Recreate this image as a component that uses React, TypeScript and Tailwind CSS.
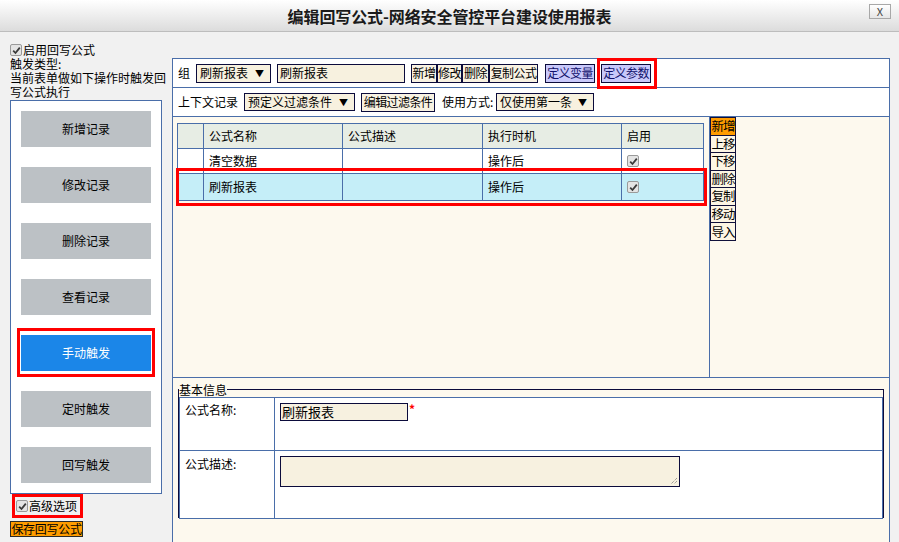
import React from "react";

const BLUE = "border-[#4a6ea9]";

function Check() {
  return (
    <span className="inline-flex items-center justify-center w-[12px] h-[12px] border border-[#9a9a9a] bg-[#e4e4e4] rounded-[2px] shrink-0">
      <svg width="9" height="9" viewBox="0 0 9 9">
        <path d="M1.2 4.6 L3.5 7 L7.8 1.6" stroke="#3a3a3a" strokeWidth="1.8" fill="none" />
      </svg>
    </span>
  );
}

function Sel({ w, h, text }: { w: string; h: string; text: string }) {
  return (
    <div className={`${w} ${h} border border-[#0b0b3b] bg-[#f7f1df] flex items-center pl-[3px] pr-[6px] justify-between shrink-0 whitespace-nowrap`}>
      <span>{text}</span>
      <span className="text-[9px] leading-none">▼</span>
    </div>
  );
}

function Btn({ children, cls = "" }: { children: React.ReactNode; cls?: string }) {
  return (
    <div className={`h-[19px] border border-[#0b0b3b] flex items-center justify-center leading-none shrink-0 whitespace-nowrap overflow-hidden tracking-[-0.6px] ${cls}`}>
      {children}
    </div>
  );
}

export default function App() {
  const nav = ["新增记录", "修改记录", "删除记录", "查看记录", "手动触发", "定时触发", "回写触发"];
  const side = ["新增", "上移", "下移", "删除", "复制", "移动", "导入"];
  return (
    <div className="w-[899px] h-[542px] overflow-hidden bg-[#f1f1f1] flex flex-col text-[12px] text-black font-['Noto_Sans_CJK_SC','Noto_Sans',sans-serif]">
      {/* title bar */}
      <div className="h-[32px] shrink-0 relative flex items-center justify-center border-b border-[#bdbdbd] bg-gradient-to-b from-white to-[#dcdcdc]">
        <span className="text-[16px] font-bold text-[#1a1a1a] tracking-[-0.1px]">编辑回写公式-网络安全管控平台建设使用报表</span>
        <div className="absolute right-[8px] top-[4px] w-[22px] h-[15px] border border-[#a8a8a8] bg-gradient-to-b from-white to-[#e6e6e6] flex items-center justify-center text-[11px] leading-none text-[#444]">
          X
        </div>
      </div>

      <div className="flex flex-1 min-h-0">
        {/* left column */}
        <div className="w-[172px] shrink-0 pl-[10px] pt-[11px] flex flex-col">
          <div className="flex items-center h-[14px] leading-[14px] gap-[1px]">
            <Check />
            <span>启用回写公式</span>
          </div>
          <div className="leading-[14px] h-[14px]">触发类型:</div>
          <div className="leading-[14px] w-[160px] h-[28px]">当前表单做如下操作时触发回写公式执行</div>
          <div className={`mt-[1px] w-[152px] h-[394px] border ${BLUE} bg-white pt-[10px] px-[10px] flex flex-col gap-[20px]`}>
            {nav.map((n) => (
              <div
                key={n}
                className={`relative w-[130px] h-[36px] shrink-0 flex items-center justify-center ${
                  n === "手动触发" ? "bg-[#1b86e8] text-white" : "bg-[#bcc1c5] text-black"
                }`}
              >
                {n}
                {n === "手动触发" && (
                  <div className="absolute left-[-4px] right-[-4px] top-[-7px] bottom-[-6px] border-[3px] border-[#ff0000]" />
                )}
              </div>
            ))}
          </div>
          <div className="ml-[2px] w-[71px] h-[24px] border-[3px] border-[#ff0000] flex items-center pl-[1px] gap-[1px]">
            <Check />
            <span className="leading-none whitespace-nowrap">高级选项</span>
          </div>
          <div className="mt-[3px] w-[73px] h-[16px] bg-[#ff9c00] border border-[#2a2a2a] flex items-center justify-center leading-none whitespace-nowrap tracking-[-0.3px] overflow-hidden">
            保存回写公式
          </div>
        </div>

        {/* main panel */}
        <div className={`mt-[26px] w-[718px] shrink-0 border-l border-t border-r ${BLUE} bg-white flex flex-col`}>
          {/* row 1 */}
          <div className={`h-[29px] shrink-0 border-b ${BLUE} flex items-center pl-[5px]`}>
            <span className="w-[18px] shrink-0">组</span>
            <Sel w="w-[75px]" h="h-[19px]" text="刷新报表" />
            <div className="ml-[6px] w-[128px] h-[19px] border border-[#0b0b3b] bg-[#f7f1df] flex items-center pl-[2px]">刷新报表</div>
            <div className="ml-[6px] flex">
              <Btn cls="w-[26px] bg-[#f8f2e2]">新增</Btn>
              <Btn cls="w-[25px] bg-[#f8f2e2]">修改</Btn>
              <Btn cls="w-[27px] bg-[#f8f2e2]">删除</Btn>
              <Btn cls="w-[49px] bg-[#f8f2e2]">复制公式</Btn>
            </div>
            <Btn cls="ml-[7px] w-[50px] bg-[#c9c9fb] text-[#10106a]">定义变量</Btn>
            <div className="relative ml-[6px]">
              <Btn cls="w-[50px] bg-[#c9c9fb] text-[#10106a]">定义参数</Btn>
              <div className="absolute left-[-4px] right-[-6px] top-[-6px] bottom-[-6px] border-[3px] border-[#ff0000]" />
            </div>
          </div>

          {/* row 2 */}
          <div className={`h-[29px] shrink-0 border-b ${BLUE} flex items-center pl-[5px] whitespace-nowrap`}>
            <span className="w-[66px] shrink-0">上下文记录</span>
            <Sel w="w-[111px]" h="h-[18px]" text="预定义过滤条件" />
            <Btn cls="ml-[6px] w-[74px] h-[18px] bg-[#f8f2e2]">编辑过滤条件</Btn>
            <span className="ml-[7px] w-[54px] shrink-0">使用方式:</span>
            <Sel w="w-[98px]" h="h-[18px]" text="仅使用第一条" />
          </div>

          {/* middle pane */}
          <div className={`h-[261px] shrink-0 border-b ${BLUE} bg-[#fdf9ee] flex`}>
            <div className={`w-[537px] shrink-0 border-r ${BLUE} pl-[4px] pt-[6px]`}>
              <div className={`relative w-[527px] border ${BLUE} grid grid-cols-[26px_139px_140px_139px_81px] grid-rows-[25px_25px_26px]`}>
                {[
                  ["", "公式名称", "公式描述", "执行时机", "启用"],
                  ["", "清空数据", "", "操作后", "chk"],
                  ["", "刷新报表", "", "操作后", "chk"],
                ].map((row, ri) =>
                  row.map((c, ci) => (
                    <div
                      key={`${ri}-${ci}`}
                      className={`flex items-center pl-[5px] ${ci < 4 ? `border-r ${BLUE}` : ""} ${
                        ri < 2 ? `border-b ${BLUE}` : ""
                      } ${ri === 0 ? "bg-[#e7ede4]" : ri === 2 ? "bg-[#c5eef8]" : "bg-white"}`}
                    >
                      {c === "chk" ? <Check /> : c}
                    </div>
                  ))
                )}
                <div className="absolute left-[-2px] top-[44px] w-[531px] h-[38px] border-[3px] border-[#ff0000]" />
              </div>
            </div>
            <div className="w-[26px] h-[124px] flex flex-col">
              {side.map((s, i) => (
                <div
                  key={s}
                  className={`flex-1 border-x-[1.5px] border-t-[1.5px] ${i === 6 ? "border-b-[1.5px]" : ""} border-[#10103a] flex items-center justify-center text-[12.5px] leading-none whitespace-nowrap overflow-hidden tracking-[-1px] ${
                    i === 0 ? "bg-[#ff9c00]" : "bg-[#fdf6e4]"
                  }`}
                >
                  {s}
                </div>
              ))}
            </div>
          </div>

          {/* bottom pane */}
          <div className="flex-1 bg-[#fdf9ee] pl-[5px] pt-[5px]">
            <fieldset className="w-[706px] h-[135px] border border-[#0b0b3b] border-b-2">
              <legend className="leading-[13px] px-0">基本信息</legend>
              <div className={`mt-[1px] border ${BLUE} bg-white grid grid-cols-[95px_1fr] grid-rows-[53px_67px]`}>
                <div className={`border-r border-b ${BLUE} pl-[5px] pt-[3px]`}>公式名称:</div>
                <div className={`border-b ${BLUE} pl-[5px] pt-[5px] flex items-start`}>
                  <div className="w-[128px] h-[18px] border border-[#0b0b3b] bg-[#f7f1e0] flex items-center pl-[1px] text-[13px]">刷新报表</div>
                  <span className="text-[#ff0000] ml-[1px] leading-[12px] font-bold">*</span>
                </div>
                <div className={`border-r ${BLUE} pl-[5px] pt-[4px]`}>公式描述:</div>
                <div className="pl-[5px] pt-[5px]">
                  <div className="relative w-[400px] h-[31px] border border-[#0b0b3b] bg-[#f7f1e0]">
                    <svg className="absolute right-[1px] bottom-[1px]" width="8" height="8" viewBox="0 0 8 8">
                      <path d="M7 1 L1 7 M7 4 L4 7" stroke="#777" strokeWidth="1" strokeDasharray="1 1" />
                    </svg>
                  </div>
                </div>
              </div>
            </fieldset>
          </div>
        </div>
      </div>
    </div>
  );
}
